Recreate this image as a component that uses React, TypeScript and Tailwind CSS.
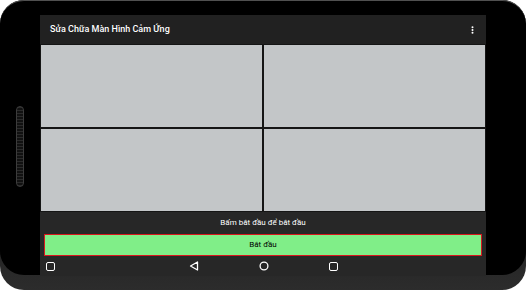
import React from "react";

export default function App() {
  return (
    <div className="w-[526px] h-[292px] bg-white" style={{ fontFamily: "Roboto, 'Noto Sans', sans-serif" }}>
      <div className="w-[526px] h-[290px] rounded-[24px] bg-gradient-to-b from-[#0c0c0c] via-[#151515] to-[#2c2c2c]">
        <div className="relative w-[526px] h-[275px] rounded-[24px] bg-black border-t-[1.5px] border-[#505050] pl-[40px] pt-[14px]">
          {/* side button */}
          <div className="absolute left-[16px] top-[105px] w-[8px] h-[81px] rounded-full border border-[#3c3c3c] bg-[repeating-linear-gradient(to_bottom,#2a2a2a_0px,#2a2a2a_1px,#111_1px,#111_3px)]" />
          {/* screen */}
          <div className="w-[446px] h-[261px] flex flex-col bg-[#272727]">
            {/* app bar */}
            <div className="h-[29px] bg-[#212121] flex items-center justify-between pl-[10px] pr-[12px] shrink-0">
              <span className="text-white text-[9px] font-medium leading-none">Sửa Chữa Màn Hình Cảm Ứng</span>
              <svg width="3" height="8" viewBox="0 0 3 8">
                <circle cx="1.5" cy="1.2" r="1" fill="#fff" />
                <circle cx="1.5" cy="4" r="1" fill="#fff" />
                <circle cx="1.5" cy="6.8" r="1" fill="#fff" />
              </svg>
            </div>
            {/* grid */}
            <div className="h-[168px] shrink-0 bg-[#151515] p-[1px] grid grid-cols-2 grid-rows-2 gap-[2px]">
              <div className="bg-[#c3c6c8]" />
              <div className="bg-[#c3c6c8]" />
              <div className="bg-[#c3c6c8]" />
              <div className="bg-[#c3c6c8]" />
            </div>
            {/* message */}
            <div className="h-[22px] shrink-0 flex items-center justify-center">
              <span className="text-white text-[8px] leading-none">Bấm bắt đầu để bắt đầu</span>
            </div>
            {/* button */}
            <div className="mx-[4px] h-[22px] shrink-0 bg-[#80ee88] border-[1.5px] border-[#d9161e] flex items-center justify-center">
              <span className="text-black text-[8px] leading-none">Bắt đầu</span>
            </div>
            {/* nav bar */}
            <div className="flex-1 grid grid-cols-[1fr_auto_1fr] items-center">
              <div className="pl-[6px] flex items-center">
                <div className="w-[9px] h-[9px] rounded-[2px] border-[1.5px] border-white" />
              </div>
              <div className="flex items-center gap-[60px]">
                <svg width="10" height="10" viewBox="0 0 10 10">
                  <path d="M8.5 1 L1.5 5 L8.5 9 Z" fill="none" stroke="#fff" strokeWidth="1.3" strokeLinejoin="round" />
                </svg>
                <svg width="10" height="10" viewBox="0 0 10 10">
                  <circle cx="5" cy="5" r="3.9" fill="none" stroke="#fff" strokeWidth="1.3" />
                </svg>
                <div className="w-[9px] h-[9px] rounded-[2px] border-[1.5px] border-white" />
              </div>
              <div />
            </div>
          </div>
        </div>
      </div>
    </div>
  );
}
